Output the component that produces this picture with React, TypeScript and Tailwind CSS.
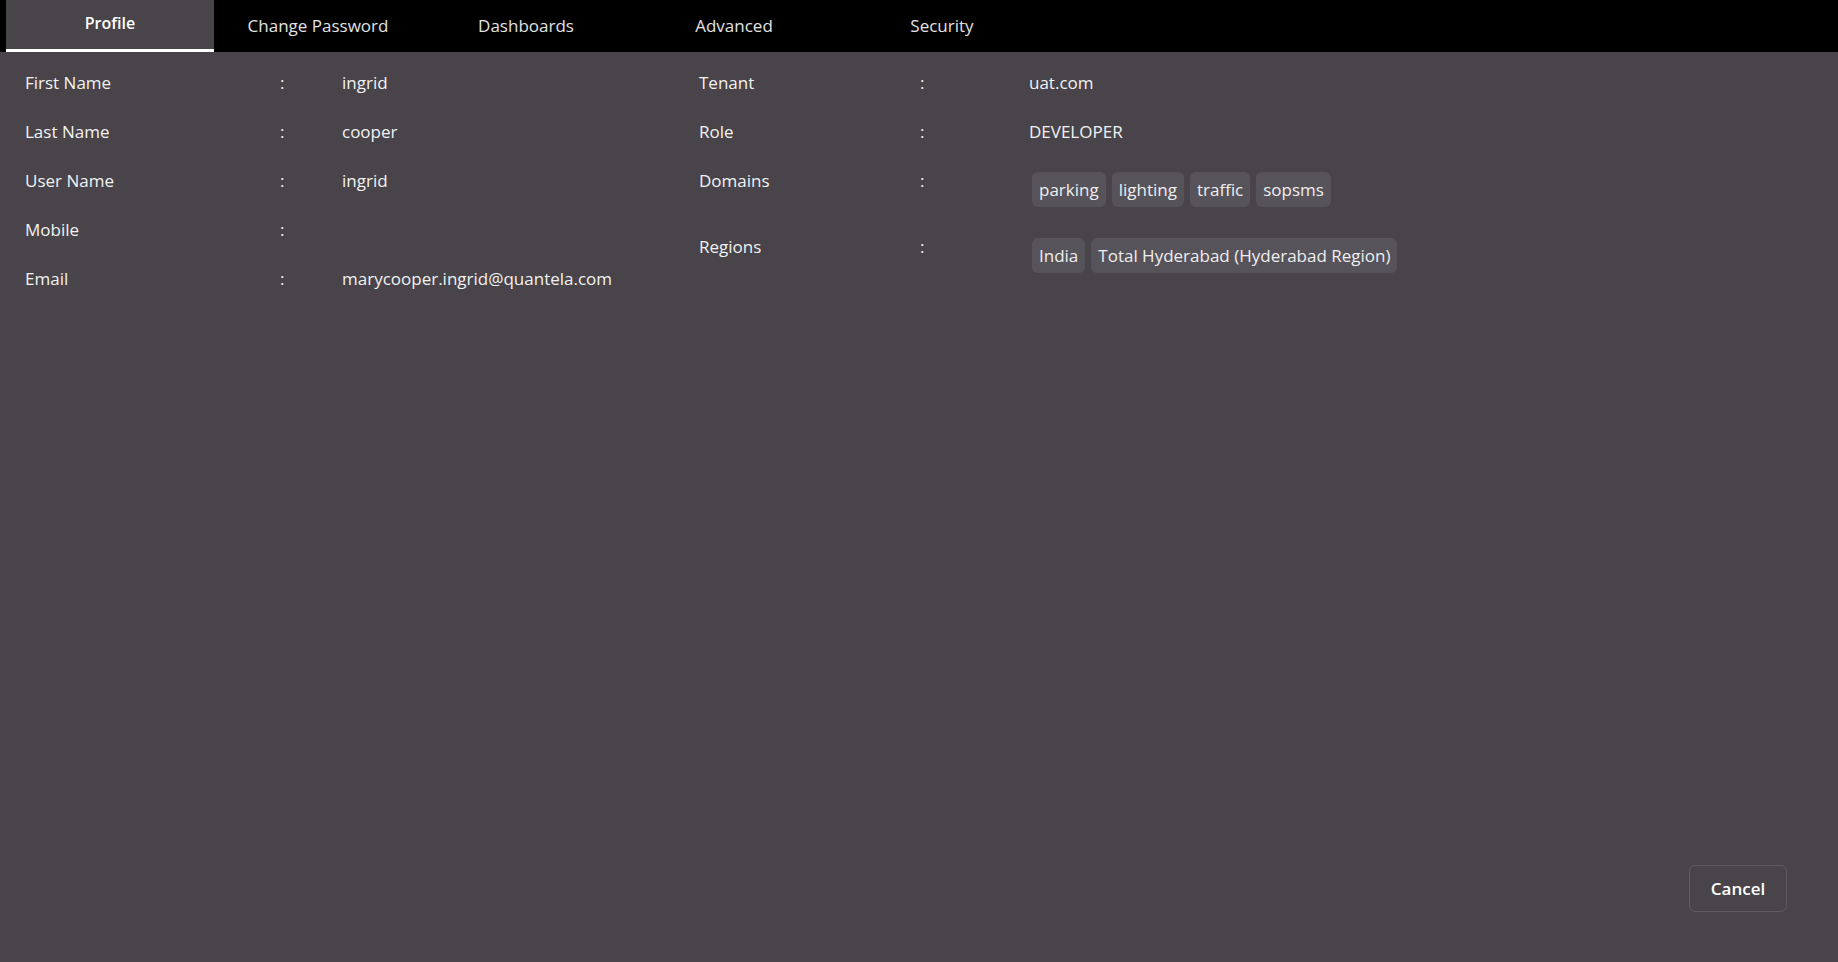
import React from "react";

const font = { fontFamily: '"Open Sans", "Noto Sans", sans-serif' };

const tabs = ["Profile", "Change Password", "Dashboards", "Advanced", "Security"];

const left: [string, string][] = [
  ["First Name", "ingrid"],
  ["Last Name", "cooper"],
  ["User Name", "ingrid"],
  ["Mobile", ""],
  ["Email", "marycooper.ingrid@quantela.com"],
];

function Chips({ items }: { items: string[] }) {
  return (
    <div className="ml-[3px] mt-[16px] flex gap-[6px]">
      {items.map((c) => (
        <span
          key={c}
          className="flex h-[35px] items-center rounded-[6px] bg-[#57535a] px-[7px] text-[17px] text-[#eeeeee]"
        >
          {c}
        </span>
      ))}
    </div>
  );
}

export default function App() {
  return (
    <div className="flex h-screen w-full flex-col bg-[#48444a] text-[17px] text-[#f2f2f2]" style={font}>
      <div className="flex h-[52px] bg-black pl-[6px]">
        {tabs.map((t, i) => (
          <div
            key={t}
            className={
              i === 0
                ? "flex w-[208px] items-center justify-center border-b-[3px] border-white bg-[#48444a] pb-[3px] text-[16px] font-semibold text-white"
                : "flex w-[208px] items-center justify-center text-[17px] text-[#e2e2e2]"
            }
          >
            {t}
          </div>
        ))}
      </div>

      <div className="flex pl-[25px] pt-[6px]">
        <div className="w-[674px]">
          {left.map(([l, v]) => (
            <div key={l} className="flex h-[49px] items-center">
              <div className="w-[255px]">{l}</div>
              <div className="w-[62px]">:</div>
              <div>{v}</div>
            </div>
          ))}
        </div>
        <div className="flex-1">
          <div className="flex h-[49px] items-center">
            <div className="w-[221px]">Tenant</div>
            <div className="w-[109px]">:</div>
            <div>uat.com</div>
          </div>
          <div className="flex h-[49px] items-center">
            <div className="w-[221px]">Role</div>
            <div className="w-[109px]">:</div>
            <div>DEVELOPER</div>
          </div>
          <div className="flex h-[66px] items-start">
            <div className="flex h-[49px] w-[221px] items-center">Domains</div>
            <div className="flex h-[49px] w-[109px] items-center">:</div>
            <Chips items={["parking", "lighting", "traffic", "sopsms"]} />
          </div>
          <div className="flex h-[66px] items-start">
            <div className="flex h-[49px] w-[221px] items-center">Regions</div>
            <div className="flex h-[49px] w-[109px] items-center">:</div>
            <Chips items={["India", "Total Hyderabad (Hyderabad Region)"]} />
          </div>
        </div>
      </div>

      <div className="mt-auto flex justify-end pb-[50px] pr-[51px]">
        <button className="flex h-[47px] w-[98px] items-center justify-center rounded-[6px] border border-[#5e5a60] text-[17px] font-semibold text-white">
          Cancel
        </button>
      </div>
    </div>
  );
}
